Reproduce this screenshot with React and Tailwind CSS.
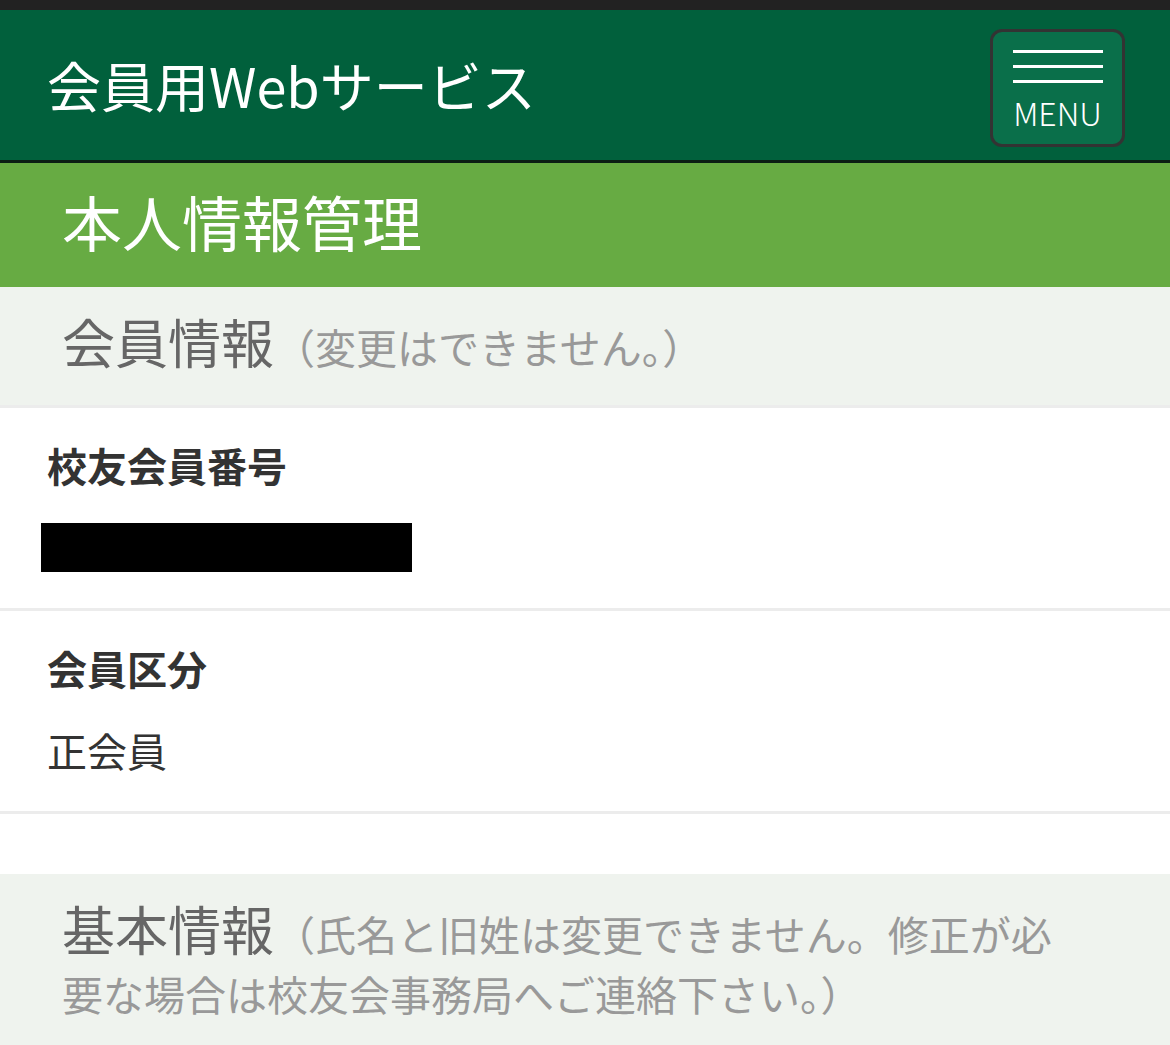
import React from "react";

const font = { fontFamily: '"Noto Sans CJK JP", "Noto Sans", sans-serif' };

function SectionHead({ title, note }) {
  return (
    <div className="bg-[#eff3ee] pl-[62px] pr-[82px] py-[29px] text-[41px] leading-[60px] text-[#999999]">
      <span className="text-[53px] leading-[48px] text-[#666666]">{title}</span>
      {note}
    </div>
  );
}

function Field({ label, children }) {
  return (
    <div className="border-b-[3px] border-[#ececec] px-[47px] pt-[27px] pb-[31px]">
      <div className="text-[40px] font-bold leading-[60px] text-[#333333]">
        {label}
      </div>
      <div className="mt-[22px] flex h-[60px] items-center text-[40px] leading-[60px] text-[#333333]">
        {children}
      </div>
    </div>
  );
}

export default function App() {
  return (
    <div style={font} className="w-[1170px] h-[1045px] overflow-hidden bg-white">
      <div className="h-[10px] bg-[#222222]" />
      <header className="flex h-[153px] items-center justify-between border-b-[3px] border-[#0b1f14] bg-[#01603c] pl-[47px] pr-[45px]">
        <h1 className="text-[54px] font-normal leading-none text-white">
          会員用Webサービス
        </h1>
        <button className="mt-[5px] flex h-[118px] w-[135px] flex-col items-center rounded-[12px] border-[3px] border-[#333333] bg-[#0a6f4a] pt-[18px]">
          <span className="block h-[3px] w-[90px] bg-white" />
          <span className="mt-[12px] block h-[3px] w-[90px] bg-white" />
          <span className="mt-[12px] block h-[3px] w-[90px] bg-white" />
          <span className="mt-[13px] text-[32px] font-light leading-none text-white">
            MENU
          </span>
        </button>
      </header>
      <div className="flex h-[124px] items-center bg-[#67ab43] px-[62px] pb-[8px]">
        <h2 className="text-[60px] font-normal leading-none text-white">
          本人情報管理
        </h2>
      </div>
      <div className="border-b-[3px] border-[#ececec]">
        <SectionHead title="会員情報" note="（変更はできません。）" />
      </div>
      <Field label="校友会員番号">
        <div className="-ml-[6px] h-[49px] w-[371px] bg-black" />
      </Field>
      <Field label="会員区分">正会員</Field>
      <div className="h-[60px]" />
      <SectionHead
        title="基本情報"
        note="（氏名と旧姓は変更できません。修正が必要な場合は校友会事務局へご連絡下さい。）"
      />
    </div>
  );
}
